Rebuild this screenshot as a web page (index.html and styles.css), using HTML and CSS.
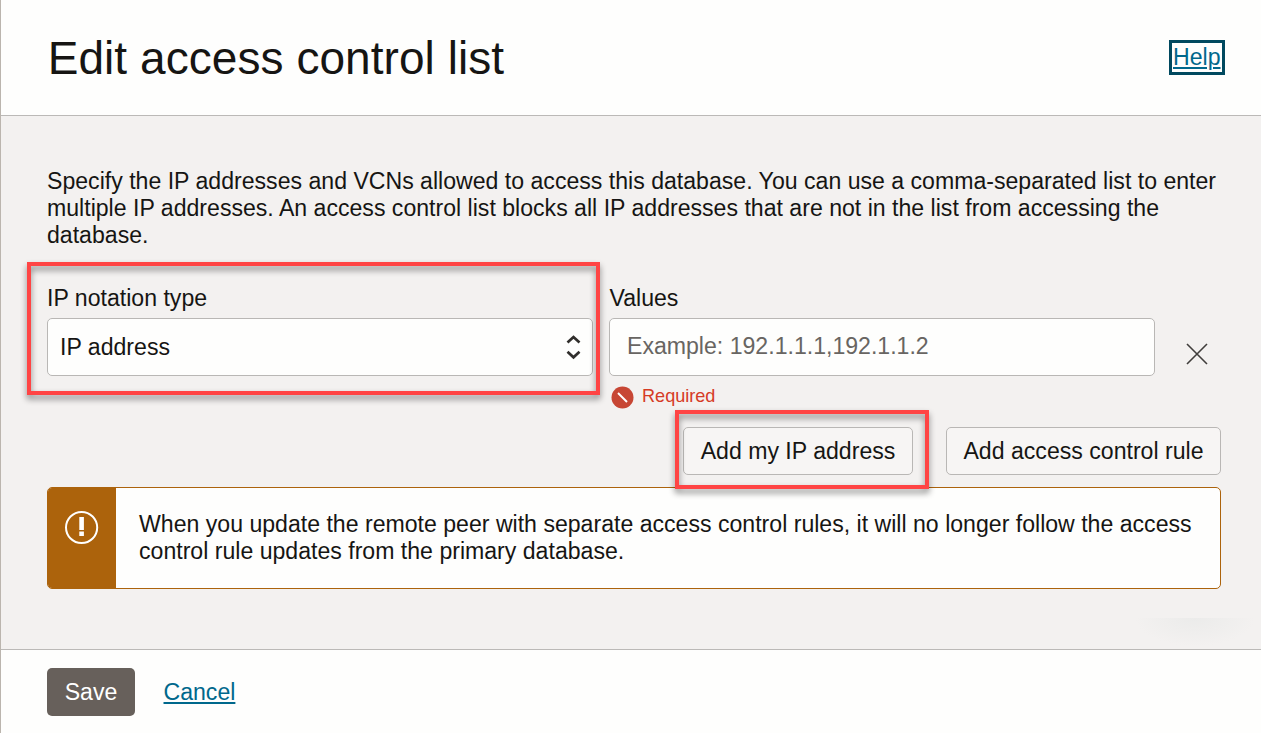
FILE: index.html
```html
<!DOCTYPE html>
<html lang="en">
<head>
<meta charset="utf-8">
<title>Edit access control list</title>
<link rel="stylesheet" href="styles.css">
</head>
<body>
<div class="panel">
  <header class="header">
    <h1 class="title">Edit access control list</h1>
    <a class="help" href="#">Help</a>
  </header>
  <main class="content">
    <p class="intro">Specify the IP addresses and VCNs allowed to access this database. You can use a comma-separated list to enter<br>multiple IP addresses. An access control list blocks all IP addresses that are not in the list from accessing the<br>database.</p>
    <div class="fields">
      <div class="field">
        <label class="label">IP notation type</label>
        <div class="select"><span>IP address</span>
          <svg class="chevrons" width="16" height="26" viewBox="0 0 16 26"><path d="M2.500 8.500l6-5.500 6 5.500M2.500 17.800l6 5.500 6-5.500"/></svg>
        </div>
        <div class="callout callout-type"></div>
      </div>
      <div class="field">
        <label class="label label-values">Values</label>
        <div class="input">Example: 192.1.1.1,192.1.1.2</div>
        <div class="error">
          <svg width="23" height="23" viewBox="0 0 23 23"><circle cx="11.500" cy="11.500" r="11" fill="#c74634"/><path d="M7 7l9 9" stroke="#fff" stroke-width="2"/></svg>
          <span class="error-text">Required</span>
        </div>
      </div>
      <svg class="remove" width="22" height="22" viewBox="0 0 22 22"><path d="M1 1l20 20M21 1L1 21"/></svg>
    </div>
    <div class="actions">
      <div class="action"><button class="button add-ip">Add my IP address</button><div class="callout callout-add"></div></div>
      <button class="button add-rule">Add access control rule</button>
    </div>
    <div class="notice">
      <div class="notice-icon"><svg width="34" height="35" viewBox="0 0 34 35"><circle cx="16.600" cy="17.500" r="15.600" fill="none" stroke="#fff" stroke-width="2"/><path d="M14.300 7h4.600v13h-4.600zM14.300 21.500h4.600v4.500h-4.600z" fill="#fff"/></svg></div>
      <p class="notice-text">When you update the remote peer with separate access control rules, it will no longer follow the access<br>control rule updates from the primary database.</p>
    </div>
    <div class="scroll-shade"></div>
  </main>
  <footer class="footer">
    <button class="save">Save</button>
    <a class="cancel" href="#">Cancel</a>
  </footer>
</div>
</body>
</html>
```
FILE: styles.css
```css
* { box-sizing: border-box; }
body { margin: 0; font: 23.1px/27px "Liberation Sans", Arial, sans-serif; color: #161513; }
p, h1 { margin: 0; }
.panel { width: 1261px; height: 733px; display: flex; flex-direction: column; border-left: 1px solid #bbb5ae; background: #fefefd; overflow: hidden; }
.header { height: 116px; flex: none; display: flex; align-items: center; justify-content: space-between; padding: 0 36px 2px 46px; border-bottom: 1px solid #bbb9b7; }
.title { padding: 2px 0 0 .7px; font-size: 46px; line-height: 54px; font-weight: 400; letter-spacing: .06px; white-space: nowrap; }
.help { width: 56px; height: 35px; margin-top: 1px; border: 3px solid #00495f; padding-left: 1px; color: #00688c; line-height: 28px; white-space: nowrap; }
.cancel, .help { text-decoration-thickness: 2px; text-underline-offset: 2px; }
.content { height: 534px; flex: none; padding: 52px 40px 0 46px; background: #f3f1f0; border-bottom: 1px solid #bbb9b7; }
.intro { white-space: nowrap; height: 81px; }
.fields { display: flex; gap: 16px; margin-top: 36px; height: 142px; }
.field { width: 546px; position: relative; }
.label { display: block; height: 33px; line-height: 27px; white-space: nowrap; }
.label-values { padding-left: .5px; }
.select, .input { height: 58px; border: 1px solid #b9b7b5; border-radius: 5px; background: #fefefd; display: flex; align-items: center; }
.select { justify-content: space-between; padding: 0 11px 0 12px; }
.input { padding: 0 17px 2px; color: #686562; }
.chevrons { fill: none; stroke: #302e2c; stroke-width: 2.7; }
.error { display: flex; align-items: center; gap: 8px; margin: 9px 0 0 2px; color: #d63b25; font-size: 18.1px; height: 25px; }
.error-text { padding-bottom: 3px; }
.remove { margin: 58px 0 0 15px; fill: none; stroke: #403e3c; stroke-width: 1.6; }
.actions { display: flex; justify-content: flex-end; gap: 33px; height: 60px; }
.action { position: relative; }
.button { height: 48px; border: 1px solid #b9b7b5; border-radius: 5px; background: #f7f5f4; color: #161513; font: inherit; padding: 0; white-space: nowrap; }
.add-ip { width: 230px; }
.add-rule { width: 275px; }
.callout { position: absolute; z-index: 1; border: 4px solid #ff4444; filter: drop-shadow(0 4px 3px #0007); pointer-events: none; }
.callout-type { left: -20px; top: -23px; width: 573px; height: 133px; }
.callout-add { left: -8px; top: -17px; width: 254px; height: 79px; }
.notice { height: 102px; display: flex; border: 1px solid #ac630c; border-radius: 5px; background: #fefefd; overflow: hidden; }
.notice-icon { width: 68px; flex: none; background: #ac630c; padding: 22px 0 0 17px; }
.notice-text { padding: 23px 0 0 23px; white-space: nowrap; }
.scroll-shade { width: 120px; height: 31px; margin: 29px -34px 0 auto; background: radial-gradient(ellipse 60px 28px at 50% 0, #ebebea, #ebebea00); }
.footer { flex: 1; display: flex; align-items: center; gap: 28.500px; padding-left: 46px; }
.save { width: 88px; height: 48px; border: 0; border-radius: 5px; background: #67605b; color: #fff; font: inherit; padding: 1px 0 0; }
.cancel { color: #00688c; padding-top: 2px; }
```
